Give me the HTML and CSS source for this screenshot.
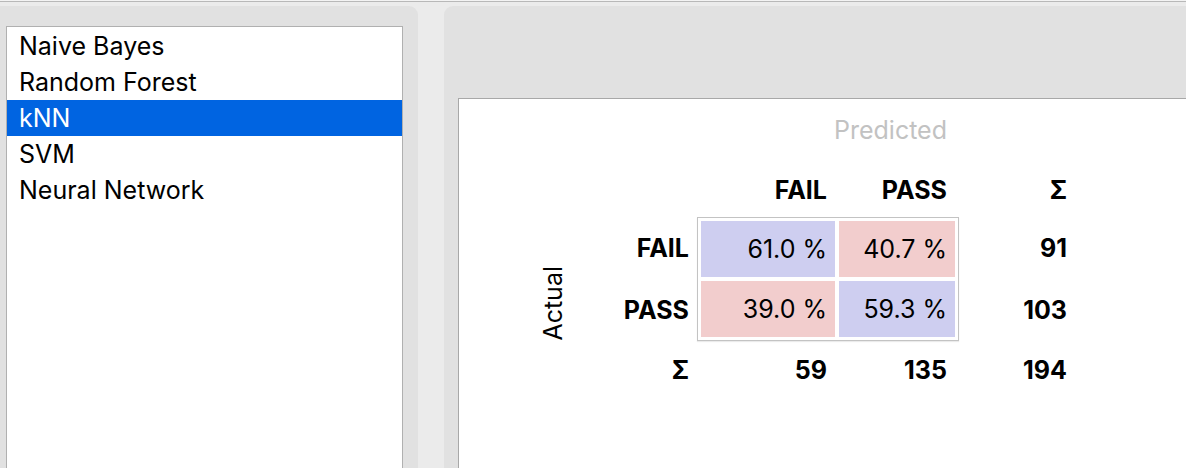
FILE: index.html
```html
<!DOCTYPE html>
<html>
<head>
<meta charset="utf-8">
<link rel="stylesheet" href="styles.css">
</head>
<body>
<div class="topline"></div>
<div class="main">
  <div class="left-panel">
    <ul class="list">
      <li>Naive Bayes</li>
      <li>Random Forest</li>
      <li class="sel">kNN</li>
      <li>SVM</li>
      <li>Neural Network</li>
    </ul>
  </div>
  <div class="right-panel">
    <div class="canvas">
      <div class="cm">
        <div class="predicted">Predicted</div>
        <div class="hdr h-c1">FAIL</div>
        <div class="hdr h-c2">PASS</div>
        <div class="hdr h-sum">Σ</div>
        <div class="actual">Actual</div>
        <div class="lbl r1">FAIL</div>
        <div class="lbl r2">PASS</div>
        <div class="matrix">
          <div class="cell good">61.0 %</div>
          <div class="cell bad">40.7 %</div>
          <div class="cell bad">39.0 %</div>
          <div class="cell good">59.3 %</div>
        </div>
        <div class="tot r1">91</div>
        <div class="tot r2">103</div>
        <div class="lbl sumrow">Σ</div>
        <div class="bsum s-c1">59</div>
        <div class="bsum s-c2">135</div>
        <div class="bsum s-all">194</div>
      </div>
    </div>
  </div>
</div>
</body>
</html>
```

FILE: styles.css
```css
html, body {
  margin: 0;
  padding: 0;
}
body {
  width: 1186px;
  height: 468px;
  overflow: hidden;
  background: #ebebeb;
  font-family: "Inter", "Liberation Sans", sans-serif;
  color: #000;
}
.topline {
  height: 1px;
  background: #f3f3f3;
  border-bottom: 1px solid #b8b8b8;
}
.main {
  display: flex;
  gap: 26px;
  margin-top: 4px;
  height: 470px;
}
.left-panel {
  width: 418px;
  flex: none;
  box-sizing: border-box;
  background: #e1e1e1;
  border-radius: 0 9px 0 0;
  padding: 20px 15px 0 6px;
}
.list {
  list-style: none;
  margin: 0;
  padding: 1px 0 0;
  height: 100%;
  box-sizing: border-box;
  background: #fff;
  border: 1px solid #b0b0b0;
  border-bottom: none;
}
.list li {
  height: 36px;
  line-height: 37px;
  padding-left: 12px;
  font-size: 25px;
}
.list li.sel {
  background: #0064e1;
  color: #fff;
}
.right-panel {
  flex: 1;
  background: #e1e1e1;
  border-radius: 9px 0 0 0;
  padding: 92px 0 0 14px;
  box-sizing: border-box;
}
.canvas {
  height: 100%;
  box-sizing: border-box;
  background: #fff;
  border-top: 1px solid #a8a8a8;
  border-left: 1px solid #a8a8a8;
  padding: 18px 0 0 76px;
}
.cm {
  display: grid;
  grid-template-columns: 36px 126px 140px 122px 108px;
  grid-template-rows: 26px 27px 40px 7px 62px 62px 9px 40px;
  font-size: 25px;
}
.predicted {
  grid-column: 3 / 5;
  grid-row: 1;
  text-align: right;
  padding-right: 12px;
  line-height: 26px;
  color: #c2c2c2;
}
.hdr, .lbl, .tot, .bsum {
  font-weight: 700;
  text-align: right;
  align-self: center;
}
.hdr { grid-row: 3; }
.h-c1 { grid-column: 3; padding-right: 10px; }
.h-c2 { grid-column: 4; padding-right: 12px; }
.h-sum { grid-column: 5; }
.lbl { grid-column: 2; padding-right: 8px; }
.r1 { grid-row: 5; }
.r2 { grid-row: 6; }
.tot { grid-column: 5; }
.sumrow { grid-row: 8; }
.bsum { grid-row: 8; }
.s-c1 { grid-column: 3; padding-right: 10px; }
.s-c2 { grid-column: 4; padding-right: 12px; }
.s-all { grid-column: 5; }
.actual {
  grid-column: 1;
  grid-row: 5 / 9;
  writing-mode: vertical-rl;
  transform: rotate(180deg);
  align-self: center;
  justify-self: center;
  font-weight: 400;
}
.matrix {
  grid-column: 3 / 5;
  grid-row: 5 / 7;
  display: grid;
  grid-template-columns: 134px 116px;
  grid-template-rows: 56px 56px;
  gap: 4px;
  padding: 3px;
  border: 1px solid #c3c3c3;
  box-shadow: 0 1px 1px rgba(0,0,0,0.08);
}
.cell {
  text-align: right;
  padding-right: 8px;
  line-height: 56px;
}
.good { background: #cecef0; }
.bad { background: #f2cdcd; }
```
